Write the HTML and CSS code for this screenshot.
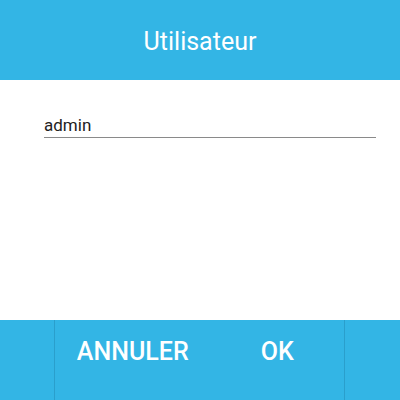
FILE: index.html
```html
<!DOCTYPE html>
<html lang="fr">
<head>
<meta charset="utf-8">
<link rel="stylesheet" href="styles.css">
</head>
<body>
<div class="dialog">
  <header class="title-bar">Utilisateur</header>
  <main class="content">
    <div class="field">admin</div>
  </main>
  <footer class="buttons">
    <div class="edge"></div>
    <button class="btn btn-cancel">ANNULER</button>
    <button class="btn btn-ok">OK</button>
    <div class="edge edge-right"></div>
  </footer>
</div>
</body>
</html>
```

FILE: styles.css
```css
html, body {
  margin: 0;
  padding: 0;
  width: 400px;
  height: 400px;
  background: #ffffff;
  font-family: Roboto, "Noto Sans", sans-serif;
}
.dialog {
  display: flex;
  flex-direction: column;
  height: 400px;
}
.title-bar {
  height: 80px;
  background: #33b5e5;
  color: #ffffff;
  font-size: 25px;
  display: flex;
  align-items: center;
  justify-content: center;
  padding-top: 3px;
  box-sizing: border-box;
}
.content {
  flex: 1;
  padding: 33px 24px 0 44px;
}
.field {
  width: 332px;
  font-size: 17px;
  color: #222222;
  line-height: 20px;
  padding-top: 2px;
  padding-bottom: 2px;
  border-bottom: 1px solid #8a8a8a;
}
.buttons {
  height: 80px;
  background: #33b5e5;
  display: flex;
}
.edge {
  width: 54px;
  border-right: 1px solid #2a9fcc;
}
.edge-right {
  width: 55px;
  border-right: none;
  border-left: 1px solid #2a9fcc;
}
.btn {
  flex: 1;
  background: transparent;
  border: none;
  color: #ffffff;
  font-family: Roboto, "Noto Sans", sans-serif;
  font-weight: 500;
  font-size: 25px;
  padding: 0 0 0 11px;
  height: 62px;
  margin: 0;
  display: flex;
  align-items: center;
  justify-content: center;
}
```
